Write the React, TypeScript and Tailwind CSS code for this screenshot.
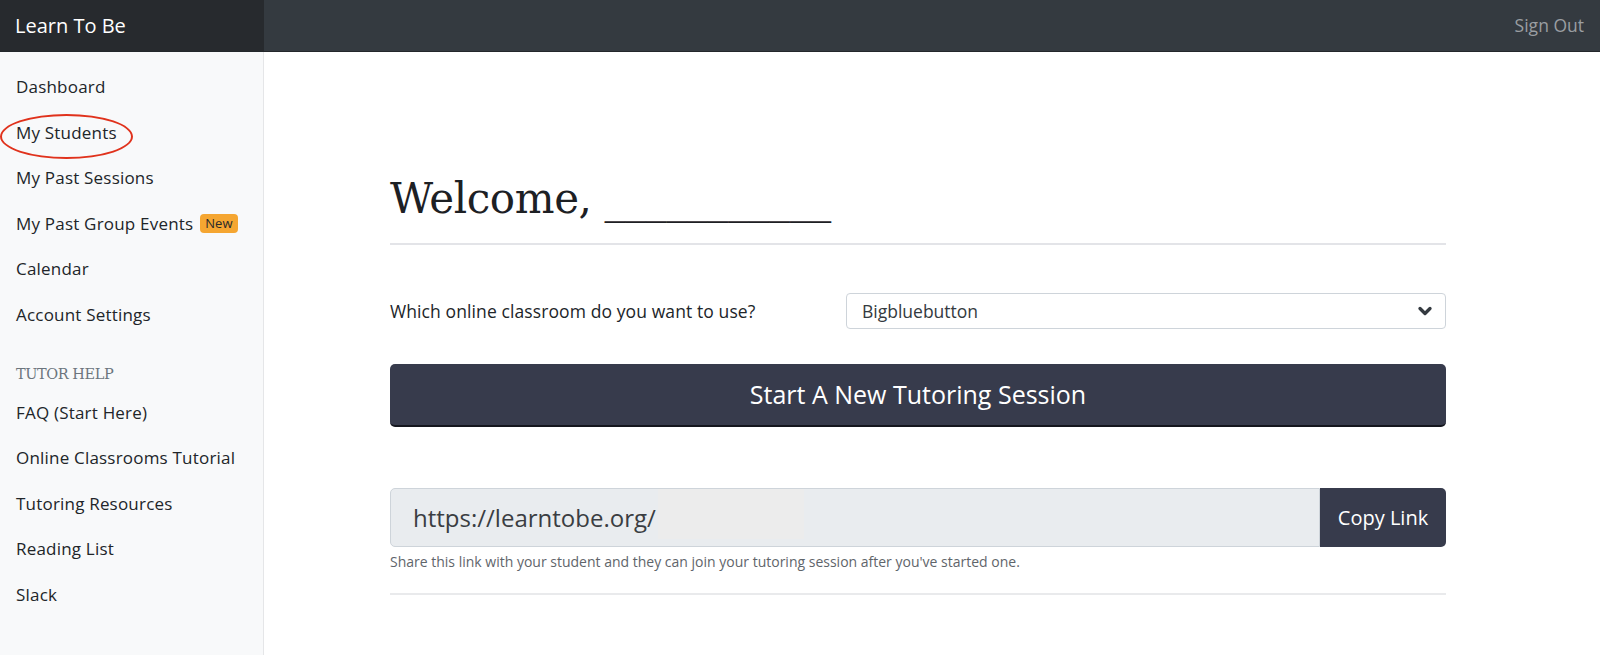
import { ChevronDown } from 'lucide-react';

const sans = "font-['Open_Sans','Noto_Sans',sans-serif]";

const mainLinks = ['Dashboard', 'My Students', 'My Past Sessions', 'My Past Group Events', 'Calendar', 'Account Settings'];
const helpLinks = ['FAQ (Start Here)', 'Online Classrooms Tutorial', 'Tutoring Resources', 'Reading List', 'Slack'];

function NavItem({ label }: { label: string }) {
  return (
    <div className="relative h-[45.6px] flex items-center pl-4 text-[17px] tracking-[0.2px] text-[#212529]">
      <span>{label}</span>
      {label === 'My Past Group Events' && (
        <span className="ml-[7px] rounded-[4px] bg-[#f5a631] px-[5px] text-[13px] leading-[19px] tracking-normal text-[#2a2a2a]">
          New
        </span>
      )}
      {label === 'My Students' && (
        <span className="absolute left-0 top-[4px] h-[45px] w-[133px] rounded-[50%] border-2 border-[#e0321c]" />
      )}
    </div>
  );
}

export default function App() {
  return (
    <div className={`${sans} w-[1600px] h-[655px] overflow-hidden bg-white flex flex-col`}>
      <header className="h-[52px] flex bg-[#343a40] border-b border-[#23272b]">
        <div className="w-[264px] bg-[#272a2e] flex items-center pl-[15px] text-[20px] text-white">Learn To Be</div>
        <div className="flex-1 flex items-center justify-end pr-[16px] text-[17.5px] text-[#9a9ea2]">Sign Out</div>
      </header>
      <div className="flex flex-1">
        <aside className="w-[264px] bg-[#f8f9fa] border-r border-[#e5e6e8] pt-[12px]">
          {mainLinks.map((l) => (
            <NavItem key={l} label={l} />
          ))}
          <div className="pt-[26px] h-[48px] pl-4 flex items-end mb-[4px]">
            <span className="font-['DejaVu_Serif',serif] text-[14.5px] leading-[24px] uppercase text-[#6c757d] tracking-[-0.03em]">
              Tutor Help
            </span>
          </div>
          {helpLinks.map((l) => (
            <NavItem key={l} label={l} />
          ))}
        </aside>
        <main className="flex-1 pl-[126px]">
          <div className="w-[1056px] pt-[120px]">
            <h1 className="font-['DejaVu_Serif',serif] text-[42px] leading-[53px] text-[#1d2024] tracking-[-0.01em]">
              Welcome, ___________
            </h1>
            <div className="mt-[18px] h-[2px] bg-[#e3e4e8]" />
            <div className="mt-[48px] flex items-center h-[36px]">
              <div className="w-[456px] text-[17.5px] tracking-[0.1px] text-[#212529]">
                Which online classroom do you want to use?
              </div>
              <div className="flex-1 h-[36px] border border-[#ced4da] rounded-[4px] flex items-center justify-between px-[15px] text-[17.5px] text-[#343a40]">
                <span>Bigbluebutton</span>
                <ChevronDown className="w-[20px] h-[20px] text-[#343a40] -mr-[5px]" strokeWidth={4} />
              </div>
            </div>
            <button className="mt-[35px] w-full h-[63px] rounded-[5px] bg-[#373b4c] border-b-2 border-[#14161e] text-white text-[25px]">
              Start A New Tutoring Session
            </button>
            <div className="mt-[61px] flex h-[59px]">
              <div className="flex-1 bg-[#e9ecef] border border-[#ced4da] rounded-l-[5px] flex items-center pl-[22px] text-[24px] text-[#3a3d42]">
                <span>https://learntobe.org/</span>
                <span className="ml-[2px] h-[50px] mt-[-8px] w-[146px] bg-[#ececec]" />
              </div>
              <button className="w-[126px] bg-[#373b4c] rounded-r-[5px] text-white text-[20px]">Copy Link</button>
            </div>
            <div className="mt-[6px] text-[14px] leading-[18px] text-[#5f656b]">
              Share this link with your student and they can join your tutoring session after you've started one.
            </div>
            <div className="mt-[22px] h-[2px] bg-[#e9eaec]" />
          </div>
        </main>
      </div>
    </div>
  );
}
